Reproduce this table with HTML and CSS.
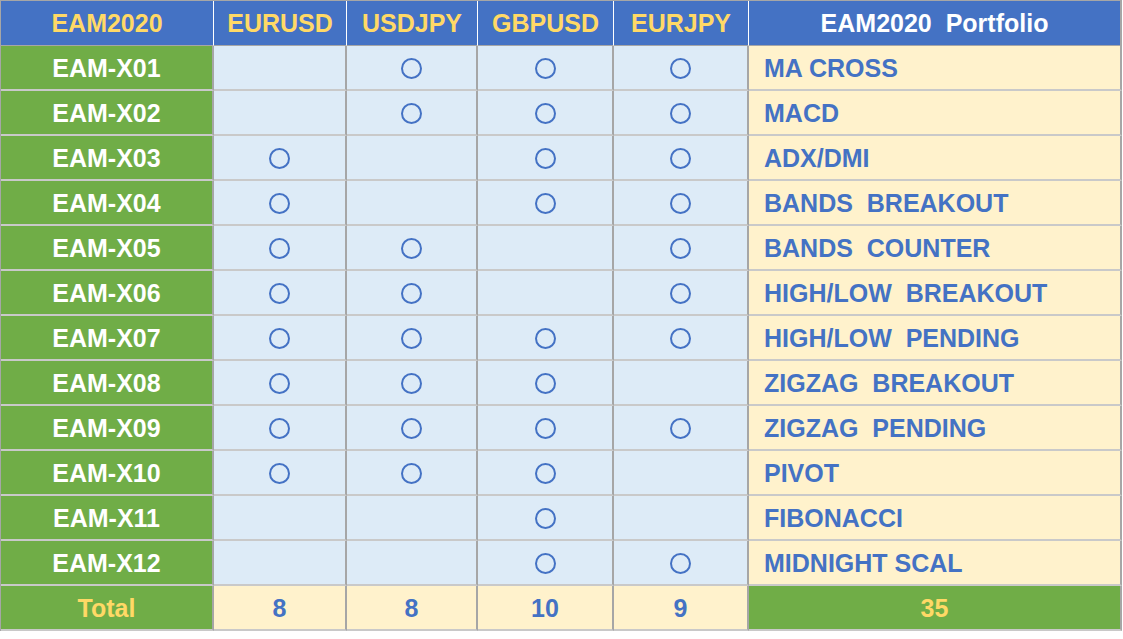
FILE: index.html
```html
<!DOCTYPE html>
<html>
<head>
<meta charset="utf-8">
<link rel="stylesheet" href="styles.css">
</head>
<body>
<div class="sheet">
  <div class="c hd gold">EAM2020</div>
  <div class="c hd gold">EURUSD</div>
  <div class="c hd gold">USDJPY</div>
  <div class="c hd gold">GBPUSD</div>
  <div class="c hd gold">EURJPY</div>
  <div class="c hd white last">EAM2020  Portfolio</div>

  <div class="c id">EAM-X01</div><div class="c mk"></div><div class="c mk"><i class="o"></i></div><div class="c mk"><i class="o"></i></div><div class="c mk"><i class="o"></i></div><div class="c nm">MA CROSS</div>
  <div class="c id">EAM-X02</div><div class="c mk"></div><div class="c mk"><i class="o"></i></div><div class="c mk"><i class="o"></i></div><div class="c mk"><i class="o"></i></div><div class="c nm">MACD</div>
  <div class="c id">EAM-X03</div><div class="c mk"><i class="o"></i></div><div class="c mk"></div><div class="c mk"><i class="o"></i></div><div class="c mk"><i class="o"></i></div><div class="c nm">ADX/DMI</div>
  <div class="c id">EAM-X04</div><div class="c mk"><i class="o"></i></div><div class="c mk"></div><div class="c mk"><i class="o"></i></div><div class="c mk"><i class="o"></i></div><div class="c nm">BANDS  BREAKOUT</div>
  <div class="c id">EAM-X05</div><div class="c mk"><i class="o"></i></div><div class="c mk"><i class="o"></i></div><div class="c mk"></div><div class="c mk"><i class="o"></i></div><div class="c nm">BANDS  COUNTER</div>
  <div class="c id">EAM-X06</div><div class="c mk"><i class="o"></i></div><div class="c mk"><i class="o"></i></div><div class="c mk"></div><div class="c mk"><i class="o"></i></div><div class="c nm">HIGH/LOW  BREAKOUT</div>
  <div class="c id">EAM-X07</div><div class="c mk"><i class="o"></i></div><div class="c mk"><i class="o"></i></div><div class="c mk"><i class="o"></i></div><div class="c mk"><i class="o"></i></div><div class="c nm">HIGH/LOW  PENDING</div>
  <div class="c id">EAM-X08</div><div class="c mk"><i class="o"></i></div><div class="c mk"><i class="o"></i></div><div class="c mk"><i class="o"></i></div><div class="c mk"></div><div class="c nm">ZIGZAG  BREAKOUT</div>
  <div class="c id">EAM-X09</div><div class="c mk"><i class="o"></i></div><div class="c mk"><i class="o"></i></div><div class="c mk"><i class="o"></i></div><div class="c mk"><i class="o"></i></div><div class="c nm">ZIGZAG  PENDING</div>
  <div class="c id">EAM-X10</div><div class="c mk"><i class="o"></i></div><div class="c mk"><i class="o"></i></div><div class="c mk"><i class="o"></i></div><div class="c mk"></div><div class="c nm">PIVOT</div>
  <div class="c id">EAM-X11</div><div class="c mk"></div><div class="c mk"></div><div class="c mk"><i class="o"></i></div><div class="c mk"></div><div class="c nm">FIBONACCI</div>
  <div class="c id">EAM-X12</div><div class="c mk"></div><div class="c mk"></div><div class="c mk"><i class="o"></i></div><div class="c mk"><i class="o"></i></div><div class="c nm">MIDNIGHT SCAL</div>

  <div class="c id gold">Total</div>
  <div class="c tot">8</div>
  <div class="c tot">8</div>
  <div class="c tot">10</div>
  <div class="c tot">9</div>
  <div class="c id gold">35</div>
</div>
</body>
</html>
```

FILE: styles.css
```css
html, body {
  margin: 0;
  padding: 0;
  background: #ffffff;
}
.sheet {
  display: grid;
  grid-template-columns: 213px 133px 131px 136px 135px 373px;
  grid-auto-rows: 45px;
  width: 1121px;
  border-top: 1px solid #a6a6a6;
  border-left: 1px solid #a6a6a6;
  font-family: "Liberation Sans", Arial, sans-serif;
  font-weight: bold;
  font-size: 25px;
}
.c {
  box-sizing: border-box;
  display: flex;
  align-items: center;
  justify-content: center;
  border-right: 2px solid #a6a6a6;
  border-bottom: 2px solid #c9c9c9;
  white-space: pre;
  overflow: hidden;
  padding-top: 2px;
}
.hd {
  background: #4472c4;
  border-right: 1px solid #ffffff;
  border-bottom: 1px solid #a6a6a6;
  padding-top: 1px;
}
.hd.last {
  border-right: 2px solid #a6a6a6;
}
.gold { color: #ffd966; }
.white { color: #ffffff; }
.id {
  background: #70ad47;
  color: #ffffff;
}
.id.gold { color: #ffd966; }
.mk {
  background: #ddebf7;
}
.nm {
  background: #fff2cc;
  color: #4472c4;
  justify-content: flex-start;
  padding-left: 15px;
}
.tot {
  background: #fff2cc;
  color: #4472c4;
}
.o {
  display: block;
  width: 21px;
  height: 21px;
  box-sizing: border-box;
  border: 2.5px solid #4472c4;
  border-radius: 50%;
}
```
